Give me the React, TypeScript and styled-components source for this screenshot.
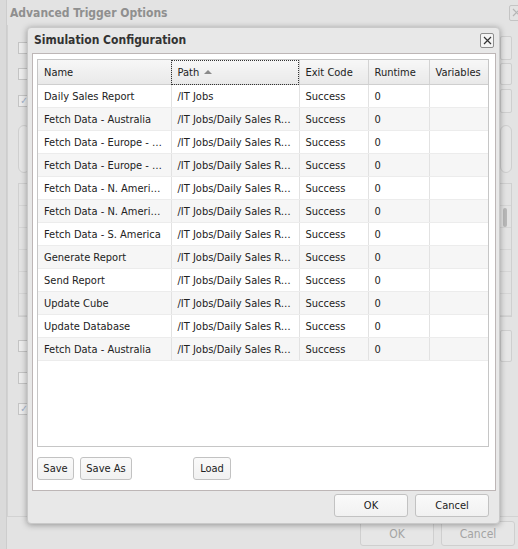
import React from 'react'
import styled, { createGlobalStyle } from 'styled-components'

const GlobalStyle = createGlobalStyle`
  html, body {
    margin: 0;
    padding: 0;
    background: #dadada;
    font-family: "DejaVu Sans Condensed", "Liberation Sans", sans-serif;
    font-size: 11px;
    color: #222;
  }
  #root {
    width: 518px;
    height: 549px;
    overflow: hidden;
  }
`

const Page = styled.div`
  position: relative;
  width: 518px;
  height: 549px;
  overflow: hidden;
`

/* dimmed dialog behind the modal */

const BackDialog = styled.div`
  display: flex;
  flex-direction: column;
  height: 100%;
  margin-left: 6px;
  width: 530px;
  background: #e3e3e3;
  border-left: 1px solid #cdcdcd;
`

const BackTitleBar = styled.div`
  display: flex;
  align-items: center;
  justify-content: space-between;
  height: 25px;
  padding: 0 0 0 3px;
  width: 512px;
`

const BackTitle = styled.span`
  font-weight: bold;
  font-size: 12px;
  color: #8f8f8f;
`

const BackClose = styled.span`
  width: 13px;
  height: 14px;
  border: 1px solid #c4c4c4;
  border-radius: 2px;
  color: #b0b0b0;
  display: flex;
  align-items: center;
  justify-content: center;
  margin-right: -2px;
`

const BackPanel = styled.div`
  display: flex;
  flex-direction: column;
  height: 492px;
  box-sizing: border-box;
  padding: 0 0 0 10px;
  border-left: 1px solid #d2d2d2;
  border-bottom: 1px solid #d2d2d2;
  width: 520px;
`

const OptionRow = styled.div<{ $h?: number; $top: number }>`
  display: flex;
  justify-content: space-between;
  align-items: center;
  height: ${p => p.$h ?? 12}px;
  margin-top: ${p => p.$top}px;
  width: 494px;
`

const FadedCheck = styled.span`
  width: 10px;
  height: 10px;
  border: 1px solid #c4c4c4;
  background: #ececec;
  color: #9fb0c8;
  font-size: 10px;
  line-height: 10px;
  text-align: center;
`

const FadedBox = styled.span<{ $h: number; $round?: boolean }>`
  width: 10px;
  height: ${p => p.$h}px;
  border: 1px solid #cfcfcf;
  border-radius: ${p => (p.$round ? '6px' : '2px')};
  background: #e6e6e6;
`

const FadedList = styled.div`
  display: flex;
  flex-direction: column;
  width: 494px;
  height: 134px;
  margin-top: 11px;
  border: 1px solid #d0d0d0;
  box-sizing: border-box;
`

const FadedListRow = styled.div`
  flex: 1;
  border-bottom: 1px solid #d6d6d6;
  display: flex;
  justify-content: flex-end;
`

const FadedScroll = styled.span`
  width: 4px;
  margin: 2px 4px 0 0;
  background: #b8b8b8;
  border-radius: 2px;
`

const BackFooter = styled.div`
  display: flex;
  gap: 7px;
  padding: 4px 0 0 353px;
`

const BackButton = styled.button`
  width: 74px;
  height: 25px;
  border: 1px solid #cfcfcf;
  border-radius: 3px;
  background: #e6e6e6;
  color: #a4a4a4;
  font: inherit;
  font-size: 12px;
`

/* the modal */

const Modal = styled.div`
  position: absolute;
  left: 27px;
  top: 27px;
  width: 473px;
  height: 497px;
  box-sizing: border-box;
  display: flex;
  flex-direction: column;
  background: #e8e8e8;
  border: 1px solid #c9c9c9;
  border-radius: 4px;
  box-shadow: 0 1px 6px rgba(0, 0, 0, 0.35);
`

const ModalTitleBar = styled.div`
  display: flex;
  align-items: center;
  justify-content: space-between;
  height: 25px;
  padding: 0 5px 1px 6px;
  box-sizing: border-box;
`

const ModalTitle = styled.span`
  font-weight: bold;
  font-size: 12px;
  color: #333;
`

const CloseButton = styled.span`
  width: 12px;
  height: 13px;
  border: 1px solid #8e8e8e;
  border-radius: 2px;
  background: #f4f4f4;
  display: flex;
  align-items: center;
  justify-content: center;
`

const ModalContent = styled.div`
  flex: 1;
  display: flex;
  flex-direction: column;
  margin: 0 3px 0 4px;
  padding: 5px 6px 9px 4px;
  background: #fff;
  border: 1px solid #bdb6b6;
`

const GridBox = styled.div`
  height: 388px;
  box-sizing: border-box;
  border: 1px solid #c6c6c6;
  overflow: hidden;
`

const Table = styled.table`
  width: 452px;
  table-layout: fixed;
  border-collapse: collapse;
`

const HeadCell = styled.th<{ $focus?: boolean }>`
  height: 24px;
  padding: 0 6px;
  text-align: left;
  font-weight: normal;
  color: #222;
  background: linear-gradient(#f7f7f7, #e9e9e9);
  border-right: 1px solid #d3d3d3;
  border-bottom: 1px solid #cfcfcf;
  outline: ${p => (p.$focus ? '1px dotted #333' : 'none')};
  outline-offset: -1px;
  white-space: nowrap;
  &:last-child {
    border-right: none;
  }
`

const SortArrow = styled.span`
  display: inline-block;
  width: 0;
  height: 0;
  margin-left: 5px;
  vertical-align: 2px;
  border-left: 4px solid transparent;
  border-right: 4px solid transparent;
  border-bottom: 4px solid #8a8a8a;
`

const Row = styled.tr<{ $alt: boolean }>`
  background: ${p => (p.$alt ? '#f6f6f6' : '#fff')};
`

const Cell = styled.td`
  height: 22px;
  padding: 0 6px;
  border-right: 1px solid #e2e2e2;
  border-bottom: 1px solid #ececec;
  white-space: nowrap;
  overflow: hidden;
  text-overflow: ellipsis;
  &:last-child {
    border-right: none;
  }
`

const ToolRow = styled.div`
  display: flex;
  gap: 6px;
  margin-top: 10px;
`

const Button = styled.button<{ $w: number; $push?: number }>`
  width: ${p => p.$w}px;
  height: 23px;
  margin-left: ${p => p.$push ?? 0}px;
  padding: 0;
  border: 1px solid #c2c2c2;
  border-radius: 3px;
  background: linear-gradient(#fafafa, #f1f1f1);
  color: #222;
  font: inherit;
  font-size: 11px;
`

const ModalFooter = styled.div`
  display: flex;
  justify-content: flex-end;
  gap: 7px;
  height: 32px;
  padding: 3px 10px 0 0;
  box-sizing: border-box;
`

const columns = [
  { label: 'Name', width: 133 },
  { label: 'Path', width: 128, sorted: true },
  { label: 'Exit Code', width: 69 },
  { label: 'Runtime', width: 61 },
  { label: 'Variables', width: 61 },
]

const path = '/IT Jobs/Daily Sales Report'

const jobs = [
  { name: 'Daily Sales Report', path: '/IT Jobs' },
  { name: 'Fetch Data - Australia', path },
  { name: 'Fetch Data - Europe - East', path },
  { name: 'Fetch Data - Europe - West', path },
  { name: 'Fetch Data - N. America - East', path },
  { name: 'Fetch Data - N. America - West', path },
  { name: 'Fetch Data - S. America', path },
  { name: 'Generate Report', path },
  { name: 'Send Report', path },
  { name: 'Update Cube', path },
  { name: 'Update Database', path },
  { name: 'Fetch Data - Australia', path },
]

function CloseIcon({ color }: { color: string }) {
  return (
    <svg width="9" height="9" viewBox="0 0 9 9">
      <path d="M1 1 L8 8 M8 1 L1 8" stroke={color} strokeWidth="1.2" />
    </svg>
  )
}

function Background() {
  return (
    <BackDialog>
      <BackTitleBar>
        <BackTitle>Advanced Trigger Options</BackTitle>
        <BackClose>
          <CloseIcon color="#b5b5b5" />
        </BackClose>
      </BackTitleBar>
      <BackPanel>
        <OptionRow $top={17}>
          <FadedCheck />
          <FadedBox $h={22} />
        </OptionRow>
        <OptionRow $top={14}>
          <FadedCheck />
          <FadedBox $h={20} />
        </OptionRow>
        <OptionRow $top={15}>
          <FadedCheck>✓</FadedCheck>
          <FadedBox $h={22} />
        </OptionRow>
        <OptionRow $top={18} $h={47}>
          <FadedBox $h={46} $round />
          <FadedBox $h={46} $round />
        </OptionRow>
        <FadedList>
          {[0, 1, 2, 3, 4, 5].map(i => (
            <FadedListRow key={i}>{i === 1 && <FadedScroll />}</FadedListRow>
          ))}
        </FadedList>
        <OptionRow $top={23}>
          <FadedCheck />
          <FadedBox $h={30} />
        </OptionRow>
        <OptionRow $top={20}>
          <FadedCheck />
          <span />
        </OptionRow>
        <OptionRow $top={19}>
          <FadedCheck>✓</FadedCheck>
          <span />
        </OptionRow>
      </BackPanel>
      <BackFooter>
        <BackButton>OK</BackButton>
        <BackButton>Cancel</BackButton>
      </BackFooter>
    </BackDialog>
  )
}

export default function App() {
  return (
    <Page>
      <GlobalStyle />
      <Background />
      <Modal>
        <ModalTitleBar>
          <ModalTitle>Simulation Configuration</ModalTitle>
          <CloseButton>
            <CloseIcon color="#333" />
          </CloseButton>
        </ModalTitleBar>
        <ModalContent>
          <GridBox>
            <Table>
              <colgroup>
                {columns.map(c => (
                  <col key={c.label} style={{ width: c.width }} />
                ))}
              </colgroup>
              <thead>
                <tr>
                  {columns.map(c => (
                    <HeadCell key={c.label} $focus={c.sorted}>
                      {c.label}
                      {c.sorted && <SortArrow />}
                    </HeadCell>
                  ))}
                </tr>
              </thead>
              <tbody>
                {jobs.map((job, i) => (
                  <Row key={i} $alt={i % 2 === 1}>
                    <Cell>{job.name}</Cell>
                    <Cell>{job.path}</Cell>
                    <Cell>Success</Cell>
                    <Cell>0</Cell>
                    <Cell />
                  </Row>
                ))}
              </tbody>
            </Table>
          </GridBox>
          <ToolRow>
            <Button $w={37}>Save</Button>
            <Button $w={52}>Save As</Button>
            <Button $w={38} $push={55}>
              Load
            </Button>
          </ToolRow>
        </ModalContent>
        <ModalFooter>
          <Button $w={74}>OK</Button>
          <Button $w={74}>Cancel</Button>
        </ModalFooter>
      </Modal>
    </Page>
  )
}
